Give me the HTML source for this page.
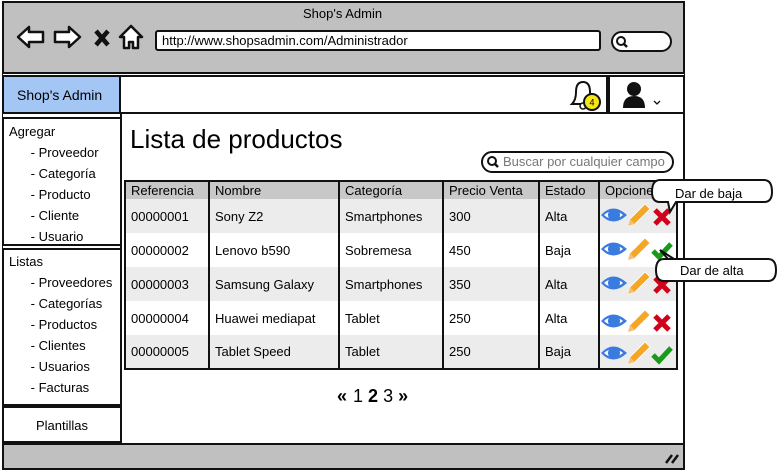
<!DOCTYPE html>
<html><head><meta charset="utf-8"><style>
*{box-sizing:border-box;margin:0;padding:0}
body{width:778px;height:472px;position:relative;background:#fff;font-family:"Liberation Sans",sans-serif;color:#000;overflow:hidden}
.a{position:absolute}
.b{border:2px solid #111}
.t{font-size:13px;white-space:nowrap}
table{border-collapse:collapse;position:absolute;left:124px;top:180px;width:554px;border:2px solid #111}
td{font-size:13px;padding:0 0 0 5px;height:34px;border-left:2px solid #111;white-space:nowrap}
th{font-size:13px;font-weight:normal;text-align:left;padding:0 0 0 5px;height:18px;background:#c8c8c8;border-left:2px solid #111}
tr.g td{background:#ececec}
</style></head><body>
<div class="a b" style="left:2px;top:1px;width:683px;height:469px;background:#c0c0c0"></div>
<div class="a t" style="left:303px;top:6px">Shop's Admin</div>
<svg class="a" style="left:14px;top:22px" width="135" height="30" viewBox="0 0 135 30">
<path d="M4 15 L15 5 L15 10 L29 10 L29 20 L15 20 L15 25 Z" fill="#fff" stroke="#111" stroke-width="2.5" stroke-linejoin="round"/>
<path d="M66 15 L55 5 L55 10 L41 10 L41 20 L55 20 L55 25 Z" fill="#fff" stroke="#111" stroke-width="2.5" stroke-linejoin="round"/>
<path d="M82 9 L94 23 M94 9 L82 23" stroke="#111" stroke-width="4.5"/>
<path d="M117 4 L106 15 L110 15 L110 26 L115 26 L115 20 L119 20 L119 26 L124 26 L124 15 L128 15 Z" fill="#fff" stroke="#111" stroke-width="2.5" stroke-linejoin="round"/>
</svg>
<div class="a b t" style="left:155px;top:30px;width:446px;height:21px;background:#fff;border-radius:3px;padding:1px 5px">http://www.shopsadmin.com/Administrador</div>
<div class="a b" style="left:611px;top:31px;width:61px;height:21px;background:#fff;border-radius:11px"></div>
<svg class="a" style="left:614px;top:35px" width="16" height="14"><circle cx="7" cy="6" r="4" fill="none" stroke="#111" stroke-width="2"/><path d="M10 9 L13 12" stroke="#111" stroke-width="2.5"/></svg>
<div class="a" style="left:3px;top:72px;width:681px;height:373px;background:#fff;border-top:2px solid #111"></div>
<div class="a b t" style="left:2px;top:75px;width:119px;height:39px;background:#a3c6f5;font-size:14px;padding:10px 0 0 13px">Shop's Admin</div>
<div class="a b" style="left:119px;top:75px;width:489px;height:39px;background:#fff"></div>
<div class="a b" style="left:608px;top:75px;width:77px;height:39px;background:#fff"></div>
<svg class="a" style="left:564px;top:78px" width="40" height="34"><path d="M8 26 Q12 22 12 14 Q12 4 19 4 Q26 4 26 14 Q26 22 30 26 Z" fill="#fff" stroke="#111" stroke-width="2"/><circle cx="19" cy="28" r="3" fill="#fff" stroke="#111" stroke-width="1.5"/><circle cx="28" cy="24" r="8" fill="#f5e51a" stroke="#111" stroke-width="2"/><text x="28" y="27.5" font-size="9" font-family="Liberation Sans" text-anchor="middle">4</text></svg>
<svg class="a" style="left:620px;top:80px" width="45" height="30"><circle cx="14" cy="9" r="7" fill="#111"/><path d="M3 28 Q3 16 14 16 Q25 16 25 28 Z" fill="#111"/><path d="M34 21 L37 24 L40 21" fill="none" stroke="#111" stroke-width="1.3"/></svg>
<div class="a" style="left:120px;top:112px;width:565px;height:333px;border-left:2px solid #111;border-right:2px solid #111"></div>
<div class="a b" style="left:2px;top:117px;width:120px;height:129px;background:#fff"></div>
<div class="a t" style="left:9px;top:121px;line-height:21px">Agregar<br>&nbsp;&nbsp;&nbsp;&nbsp;&nbsp;&nbsp;- Proveedor<br>&nbsp;&nbsp;&nbsp;&nbsp;&nbsp;&nbsp;- Categoría<br>&nbsp;&nbsp;&nbsp;&nbsp;&nbsp;&nbsp;- Producto<br>&nbsp;&nbsp;&nbsp;&nbsp;&nbsp;&nbsp;- Cliente<br>&nbsp;&nbsp;&nbsp;&nbsp;&nbsp;&nbsp;- Usuario</div>
<div class="a b" style="left:2px;top:248px;width:120px;height:158px;background:#fff"></div>
<div class="a t" style="left:9px;top:251px;line-height:21px">Listas<br>&nbsp;&nbsp;&nbsp;&nbsp;&nbsp;&nbsp;- Proveedores<br>&nbsp;&nbsp;&nbsp;&nbsp;&nbsp;&nbsp;- Categorías<br>&nbsp;&nbsp;&nbsp;&nbsp;&nbsp;&nbsp;- Productos<br>&nbsp;&nbsp;&nbsp;&nbsp;&nbsp;&nbsp;- Clientes<br>&nbsp;&nbsp;&nbsp;&nbsp;&nbsp;&nbsp;- Usuarios<br>&nbsp;&nbsp;&nbsp;&nbsp;&nbsp;&nbsp;- Facturas</div>
<div class="a b t" style="left:2px;top:406px;width:120px;height:37px;background:#fff;padding:10px 0 0 32px">Plantillas</div>
<div class="a" style="left:130px;top:124px;font-size:26px">Lista de productos</div>
<div class="a b t" style="left:481px;top:151px;width:193px;height:22px;border-radius:11px;background:#fff;color:#777;padding:1px 0 0 20px">Buscar por cualquier campo</div>
<svg class="a" style="left:486px;top:155px" width="14" height="14"><circle cx="6" cy="6" r="4" fill="none" stroke="#111" stroke-width="2"/><path d="M9 9 L12 12" stroke="#111" stroke-width="2.5"/></svg>
<table>
<tr><th style="width:84px;border-left:none">Referencia</th><th style="width:130px">Nombre</th><th style="width:104px">Categoría</th><th style="width:96px">Precio Venta</th><th style="width:60px">Estado</th><th>Opciones</th></tr>
<tr class="g"><td style="border-left:none">00000001</td><td>Sony Z2</td><td>Smartphones</td><td>300</td><td>Alta</td><td></td></tr>
<tr><td style="border-left:none">00000002</td><td>Lenovo b590</td><td>Sobremesa</td><td>450</td><td>Baja</td><td></td></tr>
<tr class="g"><td style="border-left:none">00000003</td><td>Samsung Galaxy</td><td>Smartphones</td><td>350</td><td>Alta</td><td></td></tr>
<tr><td style="border-left:none">00000004</td><td>Huawei mediapat</td><td>Tablet</td><td>250</td><td>Alta</td><td></td></tr>
<tr class="g"><td style="border-left:none">00000005</td><td>Tablet Speed</td><td>Tablet</td><td>250</td><td>Baja</td><td></td></tr>
</table>
<svg class="a" style="left:600px;top:200px" width="76" height="170">
<defs>
<g id="e"><path d="M1 11 Q13 -2 27 11 Q13 24 1 11 Z" fill="#3a7be0"/><path d="M4 11 Q13 3 23 11 Q13 19 4 11Z" fill="#fff"/><circle cx="14" cy="11" r="6" fill="#3a7be0"/></g>
<g id="p"><path d="M28 22 L30 15 L45 0 L50 5 L35 20 Z" fill="#f5a623" stroke="#fff" stroke-width="0.8"/><path d="M28 22 L30 15 L35 20Z" fill="#f5c070"/></g>
<g id="x"><path d="M55 6 L69 20 M69 6 L55 20" stroke="#d0021b" stroke-width="5"/></g>
<g id="c"><path d="M53 13 L59 19 L71 6" fill="none" stroke="#1a9a1a" stroke-width="5"/></g>
</defs>
<g transform="translate(0,4)"><use href="#e"/><use href="#p"/><use href="#x"/></g>
<g transform="translate(0,38)"><use href="#e"/><use href="#p"/><use href="#c"/></g>
<g transform="translate(0,72)"><use href="#e"/><use href="#p"/><use href="#x"/></g>
<g transform="translate(0,110)"><use href="#e"/><use href="#p"/><use href="#x"/></g>
<g transform="translate(0,142)"><use href="#e"/><use href="#p"/><use href="#c"/></g>
</svg>
<svg class="a" style="left:648px;top:178px" width="130" height="110">
<path d="M12 2 L116 2 Q124 2 124 14 Q124 24 116 24 L28 24 L22 34 L20 24 L12 24 Q4 24 4 14 Q4 2 12 2Z" fill="#fff" stroke="#111" stroke-width="2"/>
<path d="M16 81 L120 81 Q128 81 128 92 Q128 103 120 103 L16 103 Q8 103 8 92 Q8 81 16 81 L20 81 L12 72 L26 81Z" fill="#fff" stroke="#111" stroke-width="2"/>
</svg>
<div class="a t" style="left:675px;top:186px">Dar de baja</div>
<div class="a t" style="left:680px;top:263px">Dar de alta</div>
<div class="a" style="left:337px;top:386px;font-size:18px;white-space:nowrap"><b>«</b><span style="margin-left:6px">1</span> <b>2</b> 3 <b>»</b></div>
<div class="a" style="left:2px;top:443px;width:683px;height:27px;background:#c0c0c0;border:2px solid #111"></div>
<svg class="a" style="left:663px;top:451px" width="18" height="14"><path d="M3 12 L9 4 M9 12 L15 4" stroke="#111" stroke-width="2.5"/></svg>
</body></html>
